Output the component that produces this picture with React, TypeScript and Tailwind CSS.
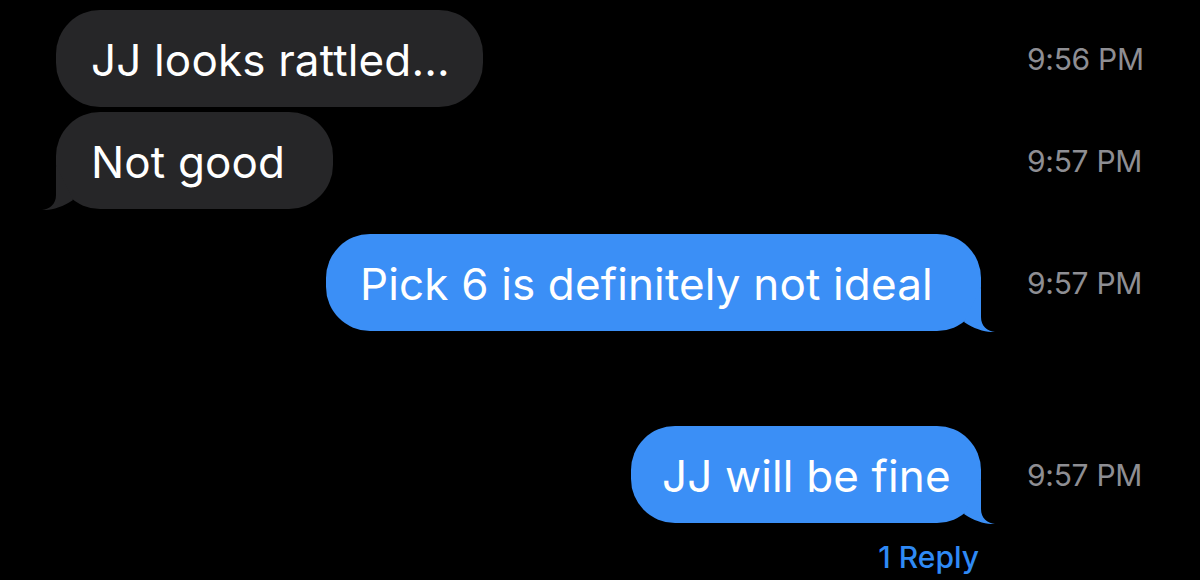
import React from "react";

type Msg = {
  text: string;
  time: string;
  from: "them" | "me";
  width: string;
  pad: string;
  tail?: boolean;
  gap: string;
};

const messages: Msg[] = [
  { text: "JJ looks rattled...", time: "9:56 PM", from: "them", width: "w-[427px]", pad: "pl-[35px]", gap: "mt-[10px]" },
  { text: "Not good", time: "9:57 PM", from: "them", width: "w-[277px]", pad: "pl-[35px]", tail: true, gap: "mt-[5px]" },
  { text: "Pick 6 is definitely not ideal", time: "9:57 PM", from: "me", width: "w-[655px]", pad: "pl-[34px]", tail: true, gap: "mt-[25px]" },
  { text: "JJ will be fine", time: "9:57 PM", from: "me", width: "w-[350px]", pad: "pl-[31px]", tail: true, gap: "mt-[95px]" },
];

function Tail({ side, color }: { side: "left" | "right"; color: string }) {
  // iMessage style tail, drawn for the right side and mirrored for the left
  return (
    <svg
      width="42"
      height="50"
      viewBox="0 0 42 50"
      className={
        side === "right"
          ? "absolute right-[-16px] bottom-[-1px]"
          : "absolute left-[-16px] bottom-[-1px] -scale-x-100"
      }
    >
      <path d="M26 5 L26 35 C26 44 32 49 40 50 C33 50.5 20 48 9 40 Z" fill={color} />
    </svg>
  );
}

function Bubble({ msg }: { msg: Msg }) {
  const mine = msg.from === "me";
  const color = mine ? "#3b8ff6" : "#262628";
  return (
    <div
      className={`relative h-[97px] ${msg.width} ${msg.pad} rounded-[44px] flex items-center text-white text-[44px] tracking-[0.15px] ${
        mine ? "bg-[#3b8ff6]" : "bg-[#262628]"
      }`}
    >
      {msg.tail && <Tail side={mine ? "right" : "left"} color={color} />}
      <span className="relative whitespace-nowrap pt-[2px]">{msg.text}</span>
    </div>
  );
}

export default function App() {
  return (
    <div
      className="w-[1200px] h-[580px] bg-black overflow-hidden flex flex-col"
      style={{ fontFamily: "Inter, 'Liberation Sans', sans-serif" }}
    >
      {messages.map((m, i) => (
        <div key={i} className={`flex items-center ${m.gap}`}>
          <div
            className={`w-[1000px] flex ${
              m.from === "me" ? "justify-end pr-[19px]" : "justify-start pl-[56px]"
            }`}
          >
            <Bubble msg={m} />
          </div>
          <div className="flex-1 pl-[27px] pt-[2px] text-[30px] text-[#8e8e93] tracking-[-0.3px]">{m.time}</div>
        </div>
      ))}
      <div className="w-[1000px] flex justify-end pr-[21px] mt-[12px]">
        <span className="text-[30px] font-medium text-[#2f8af5]">1 Reply</span>
      </div>
    </div>
  );
}
